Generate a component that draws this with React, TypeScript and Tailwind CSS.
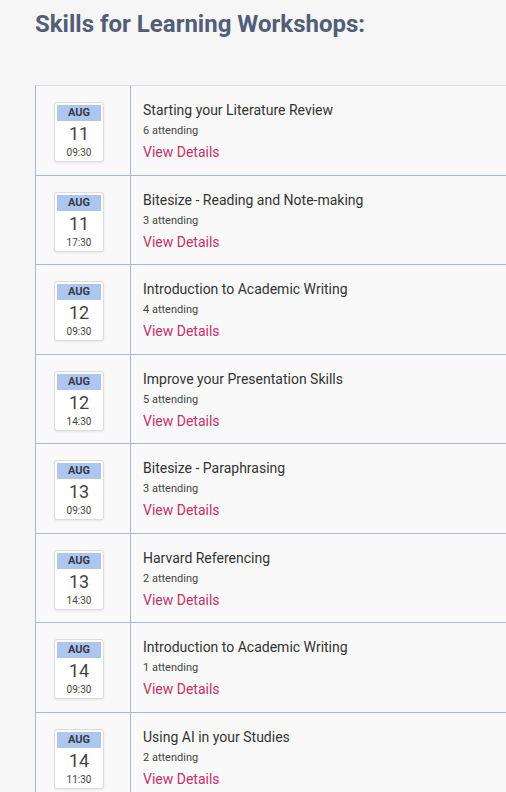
const WORKSHOPS = [
  { day: '11', time: '09:30', title: 'Starting your Literature Review', attending: 6 },
  { day: '11', time: '17:30', title: 'Bitesize - Reading and Note-making', attending: 3 },
  { day: '12', time: '09:30', title: 'Introduction to Academic Writing', attending: 4 },
  { day: '12', time: '14:30', title: 'Improve your Presentation Skills', attending: 5 },
  { day: '13', time: '09:30', title: 'Bitesize - Paraphrasing', attending: 3 },
  { day: '13', time: '14:30', title: 'Harvard Referencing', attending: 2 },
  { day: '14', time: '09:30', title: 'Introduction to Academic Writing', attending: 1 },
  { day: '14', time: '11:30', title: 'Using AI in your Studies', attending: 2 },
]

function DateBadge({ day, time }: { day: string; time: string }) {
  return (
    <div className="flex w-[50px] flex-col items-center rounded-[3px] border border-[#dcdcdc] bg-white p-[2px] pb-[1px] shadow-[0_1px_2px_rgba(0,0,0,0.08)]">
      <div className="w-full bg-[#aec6ee] text-center text-[11px] leading-[16px] font-bold text-[#333a4a]">AUG</div>
      <div className="mt-[3px] text-[18px] leading-[20px] text-[#444]">{day}</div>
      <div className="mt-[2px] text-[10px] leading-[14px] text-[#444]">{time}</div>
    </div>
  )
}

export default function App() {
  return (
    <div className="min-h-[792px] overflow-hidden bg-[#f6f6f6] font-['Roboto',sans-serif]">
      <h1 className="pt-[8px] pl-[35px] text-[24px] leading-[32px] font-bold text-[#525e77]">
        Skills for Learning Workshops:
      </h1>
      <div className="mt-[45px] ml-[35px] w-[520px] border-t border-l border-t-[#dedede] border-l-[#aab8cf] bg-[#f9f9f9]">
        {WORKSHOPS.map((w, i) => (
          <div key={i} className="flex h-[89.5px] border-b border-[#aab8cf]">
            <div className="flex w-[95px] shrink-0 items-start border-r border-[#aab8cf] pt-[16px] pl-[18px]">
              <DateBadge day={w.day} time={w.time} />
            </div>
            <div className="flex flex-col pt-[14px] pl-[12px]">
              <div className="text-[14px] leading-[20px] text-[#333]">{w.title}</div>
              <div className="mt-[3px] text-[11px] leading-[16px] text-[#444]">{w.attending} attending</div>
              <div className="mt-[3px] text-[14px] leading-[20px] text-[#c3306b]">View Details</div>
            </div>
          </div>
        ))}
      </div>
    </div>
  )
}
